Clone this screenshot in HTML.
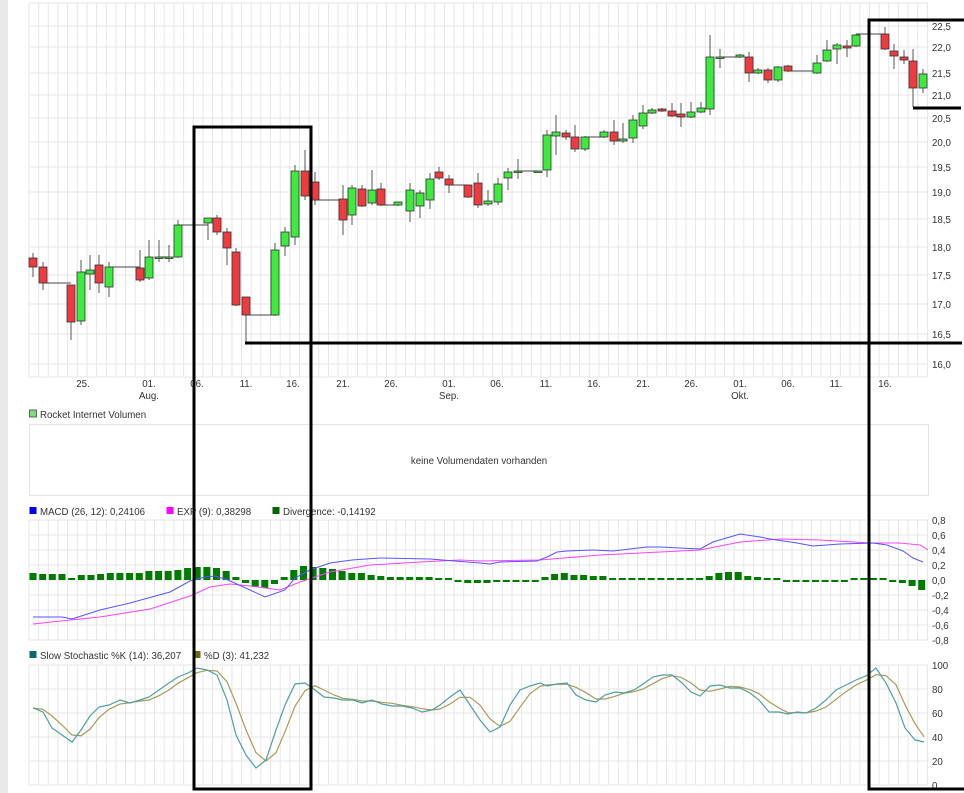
<!DOCTYPE html>
<html><head><meta charset="utf-8"><style>
html,body{margin:0;padding:0;width:964px;height:793px;overflow:hidden;background:#fff;font-family:"Liberation Sans",sans-serif}
#strip{position:absolute;left:0;top:0;width:8px;height:793px;background:#e9e9e9}
svg{position:absolute;left:0;top:0}
</style></head><body>
<div id="strip"></div>
<svg id="s" width="964" height="793" xmlns="http://www.w3.org/2000/svg" font-family="Liberation Sans, sans-serif" font-size="9.7" fill="#333"></svg>
<script>
var s=document.getElementById('s');var h='';
function L(x1,y1,x2,y2,c,w){h+='<line x1="'+x1+'" y1="'+y1+'" x2="'+x2+'" y2="'+y2+'" stroke="'+c+'" stroke-width="'+(w||1)+'"/>';}
function R(x,y,w,hh,f,st){h+='<rect x="'+x+'" y="'+y+'" width="'+w+'" height="'+hh+'" fill="'+f+'"'+(st?' stroke="'+st+'" stroke-width="0.8"':'')+'/>';}
function T(x,y,t,a,c){h+='<text x="'+x+'" y="'+y+'"'+(a?' text-anchor="'+a+'"':'')+(c?' fill="'+c+'"':'')+'>'+t+'</text>';}
var G='#e6e6e6';
for(var i=0;i<94;i++){var x=(29+i*9.66).toFixed(1);L(x,3,x,377,G);L(x,520,x,640,G);L(x,665,x,785,G);}
var py=[[26,'22,5'],[47,'22,0'],[73,'21,5'],[95,'21,0'],[118,'20,5'],[142,'20,0'],[167,'19,5'],[192,'19,0'],[219,'18,5'],[247,'18,0'],[275,'17,5'],[304,'17,0'],[334,'16,5'],[364,'16,0']];
L(29,3,928,3,G);L(29,377,928,377,G);
py.forEach(function(p){L(29,p[0],928,p[0],G);T(932,p[0]+4,p[1]);});
var xl=[[83,'25.'],[149,'01.'],[197,'06.'],[246,'11.'],[293,'16.'],[343,'21.'],[391,'26.'],[449,'01.'],[497,'06.'],[546,'11.'],[594,'16.'],[643,'21.'],[691,'26.'],[740,'01.'],[788,'06.'],[836,'11.'],[885,'16.']];
xl.forEach(function(p){T(p[0],387,p[1],'middle');});
T(149,399,'Aug.','middle');T(449,399,'Sep.','middle');T(740,399,'Okt.','middle');
[[43,71,283],[109,140,267],[178,208,225],[246,275,315],[315,343,200],[381,398,205],[449,468,185],[518,538,171],[585,604,137],[720,740,57],[788,817,71],[856,885,34],[159,169,257]].forEach(function(f){L(f[0],f[2],f[1],f[2],'#444',1);});
var c=[[33,258,267,253,277,'r'],[43,267,283,262,290,'r'],[71,285,322,285,340,'r'],[81,272,321,260,325,'g'],[90,270,274,255,290,'g'],[99,265,283,255,293,'r'],[109,267,287,262,297,'g'],[140,268,280,250,282,'r'],[149,257,278,240,280,'g'],[159,257,258,240,262,'g'],[169,257,258,245,262,'g'],[178,225,257,220,258,'g'],[208,218,223,218,240,'g'],[217,218,232,215,235,'r'],[227,232,248,228,265,'r'],[236,252,305,248,306,'r'],[246,297,315,297,343,'r'],[275,250,315,243,316,'g'],[285,232,246,227,256,'g'],[295,171,237,165,245,'g'],[305,171,196,150,200,'r'],[315,182,200,172,205,'r'],[343,199,220,185,235,'r'],[352,188,215,185,225,'g'],[362,189,206,185,207,'r'],[372,190,203,170,205,'g'],[381,189,205,183,206,'r'],[398,202,205,202,206,'g'],[410,190,211,183,222,'g'],[420,193,206,190,218,'g'],[430,179,200,173,209,'g'],[439,172,178,167,180,'r'],[449,179,185,175,193,'r'],[468,185,197,185,198,'r'],[478,183,205,173,208,'r'],[488,201,204,190,206,'g'],[498,184,202,178,205,'g'],[508,172,178,168,190,'g'],[518,171,172,159,179,'g'],[538,171,172,171,172,'g'],[547,135,170,130,177,'g'],[556,132,136,115,155,'g'],[566,133,137,130,140,'r'],[575,137,149,125,152,'r'],[585,137,149,136,151,'g'],[604,132,137,130,138,'g'],[614,132,141,120,145,'r'],[623,139,141,123,143,'g'],[633,120,138,115,143,'g'],[643,113,126,105,129,'g'],[652,110,113,108,114,'g'],[662,109,111,108,112,'r'],[672,111,116,103,117,'r'],[681,114,117,103,127,'r'],[691,112,117,102,118,'g'],[701,108,112,102,113,'g'],[710,57,109,35,115,'g'],[720,57,58,49,68,'g'],[740,55,57,54,58,'g'],[749,57,73,52,82,'r'],[758,70,73,68,74,'g'],[768,70,80,68,83,'r'],[778,67,80,66,82,'g'],[788,66,71,65,72,'r'],[817,63,73,55,74,'g'],[827,50,61,40,62,'g'],[837,45,49,43,64,'g'],[847,46,48,40,57,'r'],[856,35,46,34,47,'g'],[885,34,49,27,50,'r'],[894,51,56,44,69,'r'],[904,57,60,50,64,'r'],[913,61,88,49,107,'r'],[923,74,88,69,93,'g']];
c.forEach(function(k){L(k[0],k[3],k[0],k[4],'#555',1);R(k[0]-4,k[1],8,Math.max(k[2]-k[1],1.5),k[5]=='r'?'#ee3b3f':'#3dea3d','#333');});
R(29.5,410,7,7,'#7fdc7f','#444');T(40,418,'Rocket Internet Volumen');
h+='<rect x="29.5" y="424.5" width="899" height="71" fill="none" stroke="#e4e4e4"/>';
T(479,464,'keine Volumendaten vorhanden','middle');
R(29.5,507,7,7,'#0000ee');T(40,515,'MACD (26, 12): 0,24106');
R(166.5,507,7,7,'#ff00ff');T(177,515,'EXP (9): 0,38298');
R(272.5,507,7,7,'#006600');T(283,515,'Divergence: -0,14192');
var ml=['0,8','0,6','0,4','0,2','0,0','-0,2','-0,4','-0,6','-0,8'];
for(i=0;i<9;i++){L(29,520+i*15,928,520+i*15,G);T(932,524+i*15,ml[i]);}
var dv=[7,6,6,6,1,5,5,6,7,7,7,7,9,9,9,10,12,13,13,12,9,3,-3,-7,-8,-4,3,10,14,13,12,11,9,7,7,5,4,3,3,3,3,3,2,1,-2,-3,-3,-3,-2,-1,-1,-1,-1,3,6,7,5,5,4,4,2,1,1,2,2,2,1,1,0,0,4,7,8,8,4,3,0,0,-1,-1,-2,-2,-1,-1,-1,1,1,1,1,-1,-3,-6,-10];
dv.forEach(function(v,i){var x=33+i*9.66;var hh=Math.max(Math.abs(v),2);var y=v>=0?580-hh:580;R((x-3.5).toFixed(1),y,7,hh,'#007a00');});
h+='<polyline fill="none" stroke="#ff44ff" stroke-width="1" points="33,624 70,620 100,617 150,609 190,596 210,587 230,584 250,586 280,590 300,582 330,572 370,565 420,562 460,560 480,561 540,560 600,555 660,552 700,550 740,542 780,539 820,540 870,543 900,543 920,545 928,550"/>';
h+='<polyline fill="none" stroke="#5555ff" stroke-width="1" points="33,617 62,617 72,619 100,610 130,603 170,592 190,581 205,577 215,576 228,580 250,590 265,597 285,590 295,578 310,570 330,563 352,560 380,558 430,559 480,563 490,564 500,562 537,561 547,557 557,552 567,551 593,550 613,551 647,547 660,547 700,549 713,542 740,534 760,537 770,539 797,543 813,546 840,544 873,543 887,545 903,551 913,558 923,562"/>';
R(29.5,651,7,7,'#0a6a6a');T(40,659,'Slow Stochastic %K (14): 36,207');
R(193.5,651,7,7,'#6b6a1a');T(204,659,'%D (3): 41,232');
var sl=['100','80','60','40','20','0'];
for(i=0;i<6;i++){L(29,665+i*24,928,665+i*24,G);T(932,669+i*24,sl[i]);}
var k=[[33,708],[43,712],[52,728],[62,735],[72,742],[81,730],[90,716],[99,707],[109,705],[120,700],[130,703],[140,700],[149,697],[159,690],[169,683],[178,677],[188,673],[197,668],[207,670],[217,675],[227,700],[236,735],[246,755],[256,768],[266,760],[276,730],[285,705],[295,684],[305,683],[315,690],[324,697],[334,698],[343,700],[353,700],[362,703],[372,700],[382,704],[392,706],[402,706],[412,708],[422,712],[432,710],[440,705],[450,697],[460,690],[470,705],[480,720],[490,732],[500,727],[510,705],[520,690],[530,686],[540,683],[547,686],[557,684],[567,683],[576,695],[586,700],[596,702],[605,695],[615,692],[624,693],[634,690],[643,684],[653,677],[662,675],[672,675],[681,682],[691,692],[700,696],[710,686],[720,685],[730,688],[740,688],[750,693],[759,700],[769,712],[779,712],[788,714],[797,712],[806,713],[816,708],[826,700],[836,690],[846,685],[856,680],[866,676],[876,668],[886,683],[896,703],[905,728],[915,740],[924,742]];
var dp=k.map(function(p,i){var a=k[Math.max(i-1,0)][1],b=k[Math.max(i-2,0)][1];return p[0]+','+((p[1]+a+b)/3).toFixed(1);}).join(' ');
h+='<polyline fill="none" stroke="#a89a5c" stroke-width="1.2" points="'+dp+'"/>';
h+='<polyline fill="none" stroke="#4f9fa0" stroke-width="1.2" points="'+k.map(function(p){return p.join(',')}).join(' ')+'"/>';
h+='<rect x="194" y="127" width="117" height="662" fill="none" stroke="#000" stroke-width="3"/>';
L(245,343,962,343,'#000',3);
L(869,20,869,790,'#000',3);L(867.5,20,964,20,'#000',3);L(867.5,789,964,789,'#000',3);
L(913,108,961,108,'#000',3);
s.innerHTML=h;
</script>
</body></html>
